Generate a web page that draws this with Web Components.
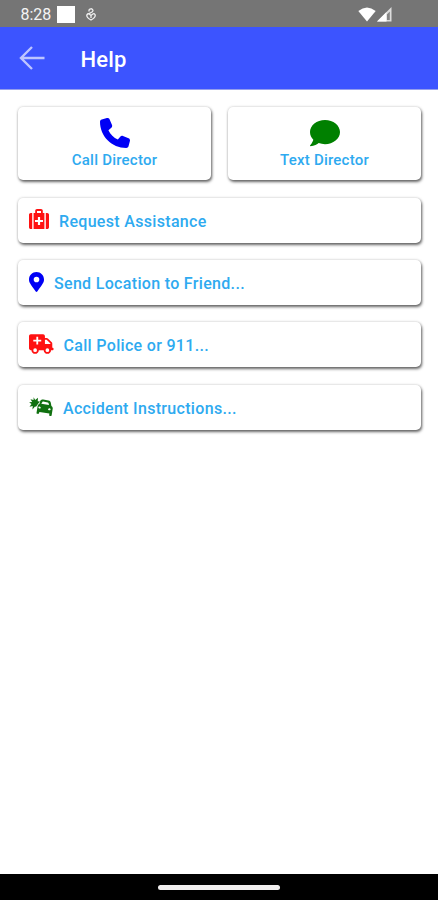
<!DOCTYPE html>
<html lang="en">
<head>
<meta charset="utf-8">
<title>Help</title>
<style>
  body {
    margin: 0;
    background: #fff;
    font-family: Roboto, "Liberation Sans", sans-serif;
  }
</style>
</head>
<body>
<help-screen></help-screen>

<script>
const icons = {
  phone: `<svg viewBox="0 0 512 512"><path d="M164.9 24.6c-7.7-18.6-28-28.5-47.4-23.2l-88 24C12.1 30.2 0 46 0 64C0 311.4 200.6 512 448 512c18 0 33.8-12.1 38.6-29.5l24-88c5.3-19.4-4.6-39.7-23.2-47.4l-96-40c-16.3-6.8-35.2-2.1-46.3 11.6L304.7 368C234.3 334.7 177.3 277.7 144 207.3L193.3 167c13.7-11.2 18.4-30 11.6-46.3l-40-96z"/></svg>`,
  comment: `<svg viewBox="0 0 512 512"><path d="M256 32C114.6 32 0 125.1 0 240c0 49.6 21.4 95 57 130.7C44.5 421.1 2.7 466 2.2 466.5c-2.2 2.3-2.8 5.7-1.5 8.7S4.8 480 8 480c66.3 0 116-31.8 140.6-51.4 32.7 12.3 69 19.4 107.4 19.4 141.4 0 256-93.1 256-208S397.4 32 256 32z"/></svg>`,
  medkit: `<svg viewBox="0 0 20 20"><path fill-rule="evenodd" d="M4.600 20V4h1.600V1.800C6.200.8 7 0 8 0h4c1 0 1.800.8 1.800 1.800V4h1.600v16zM8 4h4V2H8zM8.900 8v2.900H6v2.200h2.900V16h2.200v-2.900H14v-2.200h-2.900V8z"/><path d="M3.200 4v16H1.800C.8 20 0 19.200 0 18.200V5.800C0 4.800.8 4 1.800 4zM16.800 4v16h1.400c1 0 1.800-.8 1.800-1.800V5.800c0-1-.8-1.800-1.800-1.800z"/></svg>`,
  pin: `<svg viewBox="0 0 384 512"><path fill-rule="evenodd" d="M172 502C27 291 0 269 0 192 0 86 86 0 192 0s192 86 192 192c0 77-27 99-172 310-10 13-30 13-40 0zM192 264a72 72 0 1 0 0-144 72 72 0 0 0 0 144z"/></svg>`,
  ambulance: `<svg viewBox="0 0 640 512"><path fill-rule="evenodd" d="M624 352h-16V244c0-13-5-25-14-34L494 110c-9-9-21-14-34-14h-44V48c0-26-22-48-48-48H48C22 0 0 22 0 48v320c0 26 22 48 48 48h16c0 53 43 96 96 96s96-43 96-96h128c0 53 43 96 96 96s96-43 96-96h48c9 0 16-7 16-16v-32c0-9-7-16-16-16zM160 464a48 48 0 1 1 0-96 48 48 0 0 1 0 96zM320 184c0 4-4 8-8 8h-72v72c0 4-4 8-8 8h-32c-4 0-8-4-8-8v-72h-72c-4 0-8-4-8-8v-32c0-4 4-8 8-8h72V72c0-4 4-8 8-8h32c4 0 8 4 8 8v72h72c4 0 8 4 8 8v32zM480 464a48 48 0 1 1 0-96 48 48 0 0 1 0 96zM560 256H416V144h44l100 100v12z"/></svg>`,
  crash: `<svg viewBox="0 0 24 19"><path d="M4.600.3 6.200 3 9 .8 8.700 4.300 11 4.500 9.300 6.600 7 9.800 6 9.500 3.500 12.600 3.700 9 .5 9.800 2.500 7 .1 5.300 3.200 5 1.500 2.300 4.600 3z"/><path fill-rule="evenodd" d="M11.200 4.100c.7-1.200 1.600-1.700 3-1.500l5.300.9c1.400.3 2.100 1.100 2.300 2.300l.6 3.100c1.100.8 1.500 1.700 1.300 2.900l-1.100 6.700c-.2 1-2.500.7-2.400-.4l.2-1.500-10-1.700-.4 1.400c-.3 1-2.600.6-2.500-.4l1.100-6.600c.2-1.200.8-1.900 1.800-2.200zM12.300 6.700l7.700 1.400-.5-2c-.1-.4-.3-.6-.7-.7l-4.600-.8c-.4 0-.6 0-.8.4zM10.500 9.600c-1.300-.1-1.600 1.500-.3 1.800 1 .2 1.500.1 1.600-.3.100-.6-.6-1.300-1.300-1.500zM20.800 11.300c-.9 0-1.600.5-1.700 1.100 0 .4.400.7 1.400.9 1.300.1 1.600-1.600.3-2z"/></svg>`,
};

customElements.define(
  "app-icon",
  class extends HTMLElement {
    connectedCallback() {
      const shadowRoot = this.attachShadow({ mode: "open" });
      shadowRoot.innerHTML = `
      <style>
        :host { display: block; flex: none; }
        svg { display: block; width: 100%; height: 100%; fill: currentColor; }
      </style>
      ${icons[this.getAttribute("name")]}
    `;
    }
  }
);

customElements.define(
  "status-bar",
  class extends HTMLElement {
    constructor() {
      super();
      const shadowRoot = this.attachShadow({ mode: "open" });
      shadowRoot.innerHTML = `
      <style>
        :host {
          display: flex;
          align-items: center;
          box-sizing: border-box;
          height: 27px;
          padding: 1px 46px 0 20.500px;
          background: #757575;
          color: #f4f4f4;
          font-size: 16px;
        }
        .time { width: 30px; }
        .square { width: 17.500px; height: 17px; margin-left: 6.500px; background: #fff; }
        .debug { margin-left: 11px; }
        .signals { display: flex; margin-left: auto; gap: 1px; }
        svg { display: block; }
      </style>
      <span class="time">8:28</span>
      <span class="square"></span>
      <svg class="debug" width="10" height="13" viewBox="0 0 10 13" fill="none" stroke="#eee" stroke-width="1.300">
        <path d="M3 3.500C2.500 0 7 0 7 2.700 7 4.800 2.200 5 1 6.800M1 6.500C0 9 3 11 5 12c2-1 5-3 4-5.500C8 5 6.500 5.800 5 7.500 3.500 5.800 2 5 1 6.500M5 7v3"/>
      </svg>
      <div class="signals">
        <svg width="18" height="15" viewBox="0 0 18 15"><path d="M.3 4Q9-3 17.700 4L9 14.600z" fill="#fff"/></svg>
        <svg width="15" height="15" viewBox="0 0 15 15"><path d="M0 14.500 14.500 0v14.500z" fill="#ddd"/><path d="M9.800 7.500 12.800 4.500v8.500h-3z" fill="#858585"/><path d="M0 14.500 9.500 5v9.500z" fill="#fff"/></svg>
      </div>
    `;
    }
  }
);

customElements.define(
  "title-bar",
  class extends HTMLElement {
    constructor() {
      super();
      const shadowRoot = this.attachShadow({ mode: "open" });
      shadowRoot.innerHTML = `
      <style>
        :host {
          display: flex;
          align-items: center;
          gap: 35.500px;
          box-sizing: border-box;
          height: 63px;
          padding: 3px 19px 0;
          background: #3c54ff;
          border-bottom: 1px solid #959fed;
          color: #fff;
          font-size: 22px;
          font-weight: 500;
          letter-spacing: 0.2px;
        }
        svg { display: block; margin-top: -3px; }
      </style>
      <svg width="26" height="24" viewBox="0 0 26 24" fill="none" stroke="#bdc5ff" stroke-width="2.400">
        <path d="M25.500 12H2M13 1 2 12l11 11"/>
      </svg>
      <slot></slot>
    `;
    }
  }
);

customElements.define(
  "help-card",
  class extends HTMLElement {
    constructor() {
      super();
      const shadowRoot = this.attachShadow({ mode: "open" });
      shadowRoot.innerHTML = `
      <style>
        :host {
          display: flex;
          align-items: center;
          box-sizing: border-box;
          height: 45px;
          padding: 3px 11px 0;
          gap: 10px;
          background: #fff;
          border-radius: 5px;
          box-shadow: 1px 2px 3px rgba(0, 0, 0, 0.58), 0 0 3px rgba(0, 0, 0, 0.2);
          color: #2eaaf0;
          font-size: 16px;
          font-weight: 500;
          line-height: 20px;
          letter-spacing: 0.32px;
          white-space: nowrap;
        }
        :host([tall]) {
          flex-direction: column;
          justify-content: flex-start;
          height: 73px;
          padding: 11px 0 0;
          gap: 2px;
          font-size: 15px;
          letter-spacing: 0.22px;
        }
      </style>
      <slot name="icon"></slot>
      <span class="label"><slot></slot></span>
    `;
    }
  }
);

customElements.define(
  "nav-pill",
  class extends HTMLElement {
    constructor() {
      super();
      const shadowRoot = this.attachShadow({ mode: "open" });
      shadowRoot.innerHTML = `
      <style>
        :host {
          display: flex;
          justify-content: center;
          align-items: center;
          height: 26px;
          background: #000;
        }
        span { width: 122px; height: 5px; border-radius: 3px; background: #f0eeee; }
      </style>
      <span></span>
    `;
    }
  }
);

customElements.define(
  "help-screen",
  class extends HTMLElement {
    constructor() {
      super();
      const shadowRoot = this.attachShadow({ mode: "open" });
      shadowRoot.innerHTML = `
      <style>
        :host { display: flex; flex-direction: column; height: 900px; }
        main {
          flex: 1;
          display: flex;
          flex-direction: column;
          gap: 17.300px;
          padding: 17px 17px 0 18px;
        }
        .top { display: grid; grid-template-columns: 1fr 1fr; gap: 17px; margin-bottom: 0.500px; }
        .phone { width: 30px; height: 30px; color: #0000f5; }
        .comment { width: 30px; height: 30px; color: #008000; }
        .medkit { width: 20px; height: 20px; margin-top: -6px; color: #f11; }
        .pin { width: 15px; height: 20px; margin-top: -5px; color: #0000f5; }
        .ambulance { width: 24.500px; height: 20px; margin-top: -5px; color: #f11; }
        .crash { width: 24px; height: 19px; margin-top: -5px; color: #107010; }
      </style>
      <status-bar></status-bar>
      <title-bar>Help</title-bar>
      <main>
        <div class="top">
          <help-card tall><app-icon slot="icon" class="phone" name="phone"></app-icon>Call Director</help-card>
          <help-card tall><app-icon slot="icon" class="comment" name="comment"></app-icon>Text Director</help-card>
        </div>
        <help-card><app-icon slot="icon" class="medkit" name="medkit"></app-icon>Request Assistance</help-card>
        <help-card><app-icon slot="icon" class="pin" name="pin"></app-icon>Send Location to Friend...</help-card>
        <help-card><app-icon slot="icon" class="ambulance" name="ambulance"></app-icon>Call Police or 911...</help-card>
        <help-card><app-icon slot="icon" class="crash" name="crash"></app-icon>Accident Instructions...</help-card>
      </main>
      <nav-pill></nav-pill>
    `;
    }
  }
);
</script>
</body>
</html>
